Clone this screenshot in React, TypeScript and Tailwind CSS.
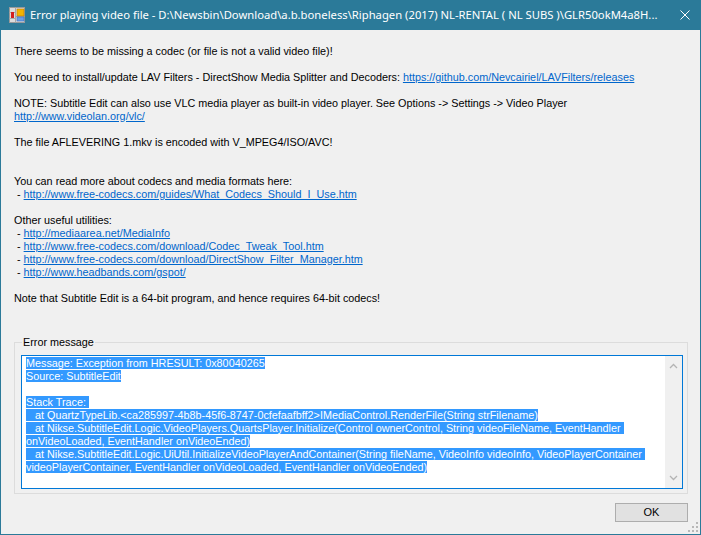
import type { ReactNode } from 'react'

const LINK = 'text-[#0066cc] underline'

type Line = ReactNode | null

const BODY: Line[] = [
  'There seems to be missing a codec (or file is not a valid video file)!',
  null,
  <>
    You need to install/update LAV Filters - DirectShow Media Splitter and Decoders:{' '}
    <span className={LINK}>https://github.com/Nevcairiel/LAVFilters/releases</span>
  </>,
  null,
  'NOTE: Subtitle Edit can also use VLC media player as built-in video player. See Options -> Settings -> Video Player',
  <span className={LINK}>http://www.videolan.org/vlc/</span>,
  null,
  'The file AFLEVERING 1.mkv is encoded with V_MPEG4/ISO/AVC!',
  null,
  null,
  'You can read more about codecs and media formats here:',
  <>
    {' - '}
    <span className={LINK}>http://www.free-codecs.com/guides/What_Codecs_Should_I_Use.htm</span>
  </>,
  null,
  'Other useful utilities:',
  <>
    {' - '}
    <span className={LINK}>http://mediaarea.net/MediaInfo</span>
  </>,
  <>
    {' - '}
    <span className={LINK}>http://www.free-codecs.com/download/Codec_Tweak_Tool.htm</span>
  </>,
  <>
    {' - '}
    <span className={LINK}>http://www.free-codecs.com/download/DirectShow_Filter_Manager.htm</span>
  </>,
  <>
    {' - '}
    <span className={LINK}>http://www.headbands.com/gspot/</span>
  </>,
  null,
  'Note that Subtitle Edit is a 64-bit program, and hence requires 64-bit codecs!',
]

const TRACE = [
  'Message: Exception from HRESULT: 0x80040265',
  'Source: SubtitleEdit',
  '',
  'Stack Trace: ',
  '   at QuartzTypeLib.<ca285997-4b8b-45f6-8747-0cfefaafbff2>IMediaControl.RenderFile(String strFilename)',
  '   at Nikse.SubtitleEdit.Logic.VideoPlayers.QuartsPlayer.Initialize(Control ownerControl, String videoFileName, EventHandler ',
  'onVideoLoaded, EventHandler onVideoEnded)',
  '   at Nikse.SubtitleEdit.Logic.UiUtil.InitializeVideoPlayerAndContainer(String fileName, VideoInfo videoInfo, VideoPlayerContainer ',
  'videoPlayerContainer, EventHandler onVideoLoaded, EventHandler onVideoEnded)',
]

function AppIcon() {
  return (
    <svg width="16" height="16" viewBox="0 0 16 16" className="shrink-0">
      <rect x="0.5" y="0.5" width="15" height="15" fill="#dcdcdc" stroke="#9a9a9a" />
      <path d="M0.5 5.5H6M0.5 11.5H6M6.5 0.5V15.5M6.5 9.5H15.5" stroke="#a8a8a8" />
      <rect x="2" y="5" width="3" height="6" fill="#d42020" />
      <rect x="8" y="2" width="7" height="7" fill="#f4b400" stroke="#c07800" strokeWidth="0.6" />
      <rect x="8" y="10" width="7" height="4" fill="#6a9ee6" stroke="#3b6fc0" strokeWidth="0.6" />
    </svg>
  )
}

function Chevron({ up }: { up?: boolean }) {
  return (
    <svg width="9" height="6" viewBox="0 0 9 6">
      <path d={up ? 'M1 5L4.5 1.5L8 5' : 'M1 1L4.5 4.5L8 1'} fill="none" stroke="#b4b4b4" strokeWidth="1.3" />
    </svg>
  )
}

export default function App() {
  return (
    <div className="flex h-[535px] w-[701px] flex-col bg-[#2b7a99] px-px pb-px font-['Liberation_Sans',Arial,sans-serif] text-[10.8px] text-black">
      {/* title bar */}
      <div className="flex h-[30px] shrink-0 items-center pl-[8px] text-white">
        <AppIcon />
        <span className="ml-[5px] flex-1 overflow-hidden whitespace-nowrap font-['Noto_Sans',sans-serif] text-[11.25px]">
          Error playing video file - D:\Newsbin\Download\a.b.boneless\Riphagen (2017) NL-RENTAL ( NL SUBS )\GLR50okM4a8H...
        </span>
        <div className="flex h-[30px] w-[30px] shrink-0 items-center justify-center">
          <svg width="10" height="10" viewBox="0 0 10 10">
            <path d="M0.5 0.5L9.5 9.5M9.5 0.5L0.5 9.5" stroke="#fff" strokeWidth="1" />
          </svg>
        </div>
      </div>

      {/* client area */}
      <div className="relative flex flex-1 flex-col bg-[#f0f0f0]">
        <div className="pl-[13px] pt-[15px]">
          {BODY.map((line, i) => (
            <div key={i} className="h-[13px] whitespace-pre leading-[13px]">
              {line}
            </div>
          ))}
        </div>

        {/* group box */}
        <div className="relative ml-[13px] mt-[37px] h-[152px] w-[674px] border border-[#dcdcdc] pl-[6px] pr-[4px] pt-[12px]">
          <span className="absolute left-[7px] top-[-7px] bg-[#f0f0f0] px-px leading-[13px]">Error message</span>
          <div className="flex h-[134px] border border-[#0078d7] bg-white">
            <div className="flex-1 overflow-hidden pl-[4px] pt-[1px]">
              {TRACE.map((t, i) => (
                <div key={i} className="h-[13px] whitespace-pre leading-[13px]">
                  {t && <span className="bg-[#3399ff] text-white">{t}</span>}
                </div>
              ))}
            </div>
            <div className="flex w-[17px] flex-col items-center justify-between bg-[#f0f0f0] py-[7px]">
              <Chevron up />
              <Chevron />
            </div>
          </div>
        </div>

        {/* buttons */}
        <div className="mt-[9px] flex justify-end pr-[12px]">
          <button className="h-[19px] w-[73px] border border-[#adadad] bg-[#e1e1e1] text-[11px] leading-none text-black">
            OK
          </button>
        </div>

        {/* size grip */}
        <svg width="12" height="12" viewBox="0 0 12 12" className="absolute bottom-[1px] right-[1px]">
          <g fill="#b8b8b8">
            <rect x="9" y="1" width="2" height="2" />
            <rect x="5" y="5" width="2" height="2" />
            <rect x="9" y="5" width="2" height="2" />
            <rect x="1" y="9" width="2" height="2" />
            <rect x="5" y="9" width="2" height="2" />
            <rect x="9" y="9" width="2" height="2" />
          </g>
        </svg>
      </div>
    </div>
  )
}
